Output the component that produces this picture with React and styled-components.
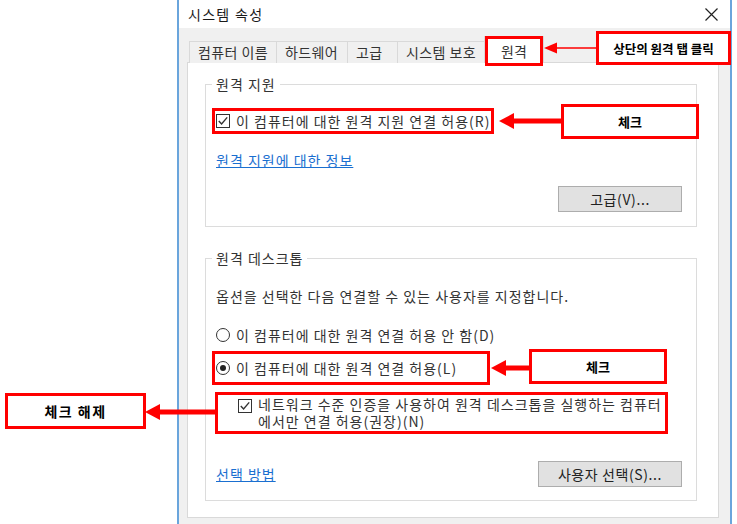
import React from "react";
import styled, { createGlobalStyle } from "styled-components";

const Global = createGlobalStyle`
  *, *::before, *::after { box-sizing: border-box; }
  html, body { margin: 0; padding: 0; background: #fff; }
  body { font-family: "Noto Sans CJK KR", "Noto Sans", sans-serif; color: #333; }
`;

const Page = styled.div`
  position: relative;
  width: 737px;
  height: 524px;
  overflow: hidden;
  background: #fff;
`;

const Window = styled.div`
  margin-left: 177px;
  width: 555px;
  height: 524px;
  border-left: 2px solid #6aa5dc;
  border-right: 2px solid #6aa5dc;
  background: #f0f0f0;
  display: flex;
  flex-direction: column;
`;

const TitleBar = styled.div`
  height: 28px;
  background: #fff;
  display: flex;
  align-items: center;
  justify-content: space-between;
  padding: 0 12px 0 9px;
`;

const Title = styled.span`
  font-size: 14px;
  line-height: 16px;
  letter-spacing: 1.3px;
  color: #1a1a1a;
`;

const Body = styled.div`
  flex: 1;
  padding: 8px 11px 0 8px;
`;

const TabRow = styled.div`
  display: flex;
  align-items: flex-end;
  height: 27px;
  margin: 0 0 -1px 2px;
  position: relative;
  z-index: 1;
`;

const Tab = styled.div`
  width: ${(p) => p.$w}px;
  height: 22px;
  padding-left: 8px;
  margin-right: -1px;
  border: 1px solid #d9d9d9;
  border-bottom: none;
  background: #f0f0f0;
  font-size: 14px;
  line-height: 20px;
  letter-spacing: 0.4px;
  color: #333;
  white-space: nowrap;
  overflow: hidden;
`;

const ActiveTab = styled.div`
  width: 60px;
  height: 27px;
  margin-left: -2px;
  padding-top: 3px;
  border: 1px solid #d9d9d9;
  border-bottom: none;
  background: #fff;
  font-size: 14px;
  line-height: 22px;
  text-align: center;
  color: #333;
  position: relative;
  z-index: 2;
`;

const Panel = styled.div`
  background: #fff;
  border: 1px solid #d9d9d9;
  padding: 13px 21px 16px 17px;
  display: flex;
  flex-direction: column;
  gap: 23px;
`;

const Group = styled.fieldset`
  margin: 0;
  min-width: 0;
  padding: 16px 14px ${(p) => p.$pb}px 6px;
  border: 1px solid #dcdcdc;
`;

const Legend = styled.legend`
  padding: 0 4px;
  font-size: 14px;
  line-height: 16px;
  letter-spacing: 1px;
  color: #333;
`;

const Stack = styled.div`
  display: flex;
  flex-direction: column;
  align-items: flex-start;
`;

const Option = styled.div`
  display: inline-flex;
  align-items: ${(p) => (p.$multi ? "flex-start" : "center")};
  gap: 6px;
  width: ${(p) => (p.$w ? `${p.$w}px` : "auto")};
  margin-top: ${(p) => p.$mt || 0}px;
  margin-left: ${(p) => p.$ml || 0}px;
  padding: ${(p) => p.$pad || "0 1px"};
  border: 3px solid ${(p) => (p.$mark ? "#ff0000" : "transparent")};
  font-size: 14px;
  line-height: ${(p) => (p.$multi ? 17 : 20)}px;
  letter-spacing: 1px;
  color: #333;
  white-space: nowrap;
`;

const Box = styled.span`
  flex: none;
  width: 14px;
  height: 14px;
  margin-top: ${(p) => p.$mt || 0}px;
  border: 1px solid #333;
  background: #fff;
  display: inline-flex;
  align-items: center;
  justify-content: center;
`;

const Radio = styled.span`
  flex: none;
  width: 14px;
  height: 14px;
  border: 1px solid #333;
  border-radius: 50%;
  background: #fff;
  display: inline-flex;
  align-items: center;
  justify-content: center;
  &::after {
    content: "";
    width: 6px;
    height: 6px;
    border-radius: 50%;
    background: ${(p) => (p.$on ? "#222" : "transparent")};
  }
`;

const Link = styled.a`
  margin-top: ${(p) => p.$mt || 0}px;
  padding-left: 4px;
  font-size: 14px;
  line-height: 16px;
  letter-spacing: 1px;
  color: #1a6fd0;
  text-decoration: underline;
  cursor: pointer;
`;

const Text = styled.div`
  margin-top: ${(p) => p.$mt || 0}px;
  padding-left: 4px;
  font-size: 14px;
  line-height: 16px;
  letter-spacing: 1px;
  color: #333;
`;

const ButtonRow = styled.div`
  align-self: stretch;
  display: flex;
  align-items: center;
  justify-content: ${(p) => p.$justify || "flex-end"};
  margin-top: ${(p) => p.$mt || 0}px;
`;

const Button = styled.button`
  width: ${(p) => p.$w}px;
  height: 26px;
  padding: 0;
  border: 1px solid #adadad;
  background: #e1e1e1;
  font-family: inherit;
  font-size: 14px;
  letter-spacing: 0.6px;
  color: #222;
`;

const Mark = styled.div`
  position: absolute;
  left: ${(p) => p.$x}px;
  top: ${(p) => p.$y}px;
  width: ${(p) => p.$w}px;
  height: ${(p) => p.$h}px;
  border: 3px solid #ff0000;
  pointer-events: none;
  z-index: 5;
`;

const Callout = styled.div`
  position: absolute;
  left: ${(p) => p.$x}px;
  top: ${(p) => p.$y}px;
  width: ${(p) => p.$w}px;
  height: ${(p) => p.$h}px;
  border: 3px solid #ff0000;
  background: #fff;
  display: flex;
  align-items: center;
  justify-content: center;
  font-size: ${(p) => p.$fs}px;
  letter-spacing: ${(p) => p.$ls || 0}px;
  font-weight: 700;
  color: #000;
  white-space: nowrap;
  z-index: 6;
`;

const ArrowSvg = styled.svg`
  position: absolute;
  left: ${(p) => p.$x}px;
  top: ${(p) => p.$y}px;
  z-index: 6;
  overflow: visible;
`;

const Check = () => (
  <svg width="12" height="12" viewBox="0 0 12 12">
    <polyline points="1.8,6 4.6,9 10.2,2.4" fill="none" stroke="#333" strokeWidth="1.4" />
  </svg>
);

const ThickArrow = ({ x, y, len }) => (
  <ArrowSvg $x={x} $y={y} width={len} height="18" viewBox={`0 0 ${len} 18`}>
    <polygon points="0,9 15,1 15,17" fill="#ff0000" />
    <rect x="14" y="6.5" width={len - 14} height="5" fill="#ff0000" />
  </ArrowSvg>
);

export default function App() {
  return (
    <Page>
      <Global />
      <Window>
        <TitleBar>
          <Title>시스템 속성</Title>
          <svg width="13" height="13" viewBox="0 0 13 13">
            <path d="M0.5 0.5 L12.5 12.5 M12.5 0.5 L0.5 12.5" stroke="#222" strokeWidth="1.2" />
          </svg>
        </TitleBar>
        <Body>
          <TabRow>
            <Tab $w={88}>컴퓨터 이름</Tab>
            <Tab $w={72}>하드웨어</Tab>
            <Tab $w={51}>고급</Tab>
            <Tab $w={90}>시스템 보호</Tab>
            <ActiveTab>원격</ActiveTab>
          </TabRow>
          <Panel>
            <Group $pb={14}>
              <Legend>원격 지원</Legend>
              <Stack>
                <Option $mark>
                  <Box>
                    <Check />
                  </Box>
                  이 컴퓨터에 대한 원격 지원 연결 허용(R)
                </Option>
                <Link $mt={18}>원격 지원에 대한 정보</Link>
                <ButtonRow $mt={18}>
                  <Button $w={124}>고급(V)...</Button>
                </ButtonRow>
              </Stack>
            </Group>
            <Group $pb={13}>
              <Legend>원격 데스크톱</Legend>
              <Stack>
                <Text $mt={6}>옵션을 선택한 다음 연결할 수 있는 사용자를 지정합니다.</Text>
                <Option $mt={18}>
                  <Radio />
                  이 컴퓨터에 대한 원격 연결 허용 안 함(D)
                </Option>
                <Option $mark $mt={3} $w={278} $pad="4px 1px 4px 1px">
                  <Radio $on />
                  이 컴퓨터에 대한 원격 연결 허용(L)
                </Option>
                <Option $mark $multi $mt={7} $ml={3} $pad="1px 3px 1px 20px">
                  <Box $mt={3}>
                    <Check />
                  </Box>
                  <span>
                    네트워크 수준 인증을 사용하여 원격 데스크톱을 실행하는 컴퓨터
                    <br />
                    에서만 연결 허용(권장)(N)
                  </span>
                </Option>
                <ButtonRow $mt={27} $justify="space-between">
                  <Link>선택 방법</Link>
                  <Button $w={144}>사용자 선택(S)...</Button>
                </ButtonRow>
              </Stack>
            </Group>
          </Panel>
        </Body>
      </Window>

      <Mark $x={485} $y={36} $w={58} $h={30} />

      <ArrowSvg $x={544} $y={41} width="54" height="14" viewBox="0 0 54 14">
        <polygon points="0,7 13,1.5 13,12.5" fill="#ff0000" />
        <line x1="12" y1="7" x2="54" y2="7" stroke="#ff0000" strokeWidth="1.5" />
      </ArrowSvg>
      <Callout $x={596} $y={31} $w={135} $h={34} $fs={12.5}>
        상단의 원격 탭 클릭
      </Callout>

      <ThickArrow x={499} y={112} len={63} />
      <Callout $x={561} $y={104} $w={138} $h={35} $fs={13}>
        체크
      </Callout>

      <ThickArrow x={491} y={359} len={39} />
      <Callout $x={529} $y={349} $w={138} $h={35} $fs={13}>
        체크
      </Callout>

      <ThickArrow x={145} y={403} len={71} />
      <Callout $x={5} $y={393} $w={141} $h={36} $fs={14} $ls={1.5}>
        체크 해제
      </Callout>
    </Page>
  );
}
